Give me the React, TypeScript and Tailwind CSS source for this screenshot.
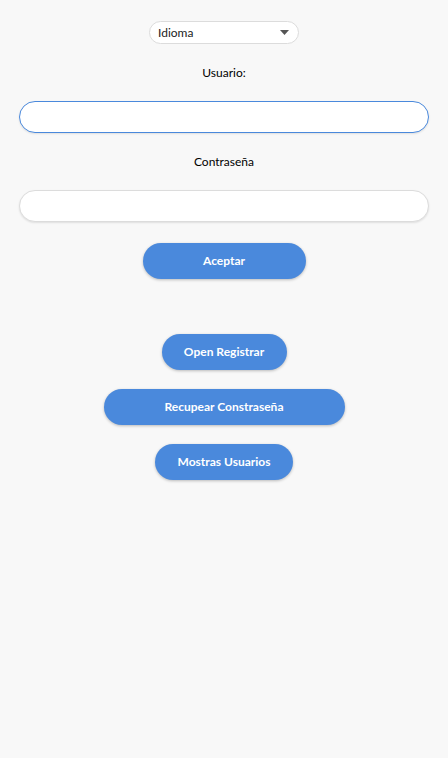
import { useState } from "react"

const btn =
  "h-9 rounded-full bg-[#4a89dc] text-white text-[12px] font-bold shadow-[0_1px_3px_rgba(0,0,0,0.25)]"

export default function App() {
  const [usuario, setUsuario] = useState("")
  const [clave, setClave] = useState("")

  return (
    <div className="min-h-[758px] w-full bg-[#f8f8f8] flex flex-col items-center font-['Lato',sans-serif] text-[12px] text-black">
      <div className="mt-[21px] w-[150px] h-[23px] rounded-full border border-[#dcdcdc] bg-white flex items-center justify-between pl-[8px] pr-[9px]">
        <span className="text-[#222]">Idioma</span>
        <svg width="9" height="5" viewBox="0 0 9 5">
          <path d="M0 0h9L4.5 5z" fill="#555" />
        </svg>
      </div>

      <p className="mt-[21px] leading-4">Usuario:</p>
      <input
        autoFocus
        value={usuario}
        onChange={(e) => setUsuario(e.target.value)}
        className="mt-[20px] w-[410px] h-[32px] rounded-full bg-white border border-[#4a89dc] px-4 outline-none shadow-[0_1px_2px_rgba(0,0,0,0.1)]"
      />

      <p className="mt-[21px] leading-4">Contraseña</p>
      <input
        type="password"
        value={clave}
        onChange={(e) => setClave(e.target.value)}
        className="mt-[20px] w-[410px] h-[32px] rounded-full bg-white border border-[#dcdcdc] px-4 outline-none shadow-[0_1px_2px_rgba(0,0,0,0.1)]"
      />

      <button className={`${btn} mt-[21px] w-[163px]`}>Aceptar</button>

      <div className="mt-[55px] flex flex-col items-center gap-[19px]">
        <button className={`${btn} w-[125px]`}>Open Registrar</button>
        <button className={`${btn} w-[241px]`}>Recupear Constraseña</button>
        <button className={`${btn} w-[138px]`}>Mostras Usuarios</button>
      </div>
    </div>
  )
}
